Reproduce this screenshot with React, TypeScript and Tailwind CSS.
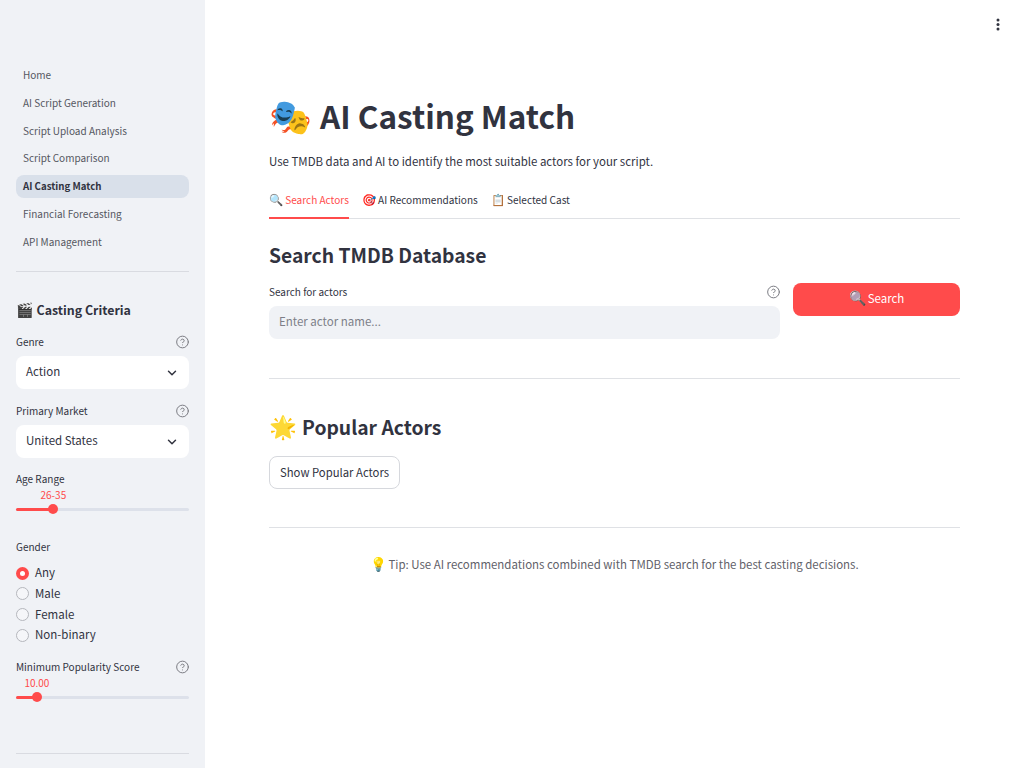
import { ChevronDown, CircleHelp } from "lucide-react";

const navItems = [
  "Home",
  "AI Script Generation",
  "Script Upload Analysis",
  "Script Comparison",
  "AI Casting Match",
  "Financial Forecasting",
  "API Management",
];

const genders = ["Any", "Male", "Female", "Non-binary"];

const fontStack = "[font-family:'Noto_Sans_CJK_SC','Noto_Sans',sans-serif]";

function FieldLabel({ label }: { label: string }) {
  return (
    <div className="flex h-[16px] items-center justify-between text-[10px] text-[#31333f]">
      <span className="pb-[1px]">{label}</span>
      <CircleHelp size={14} strokeWidth={1.7} className="translate-x-[0.5px] text-[#7a7b82]" />
    </div>
  );
}

function SidebarSelect({ label, value }: { label: string; value: string }) {
  return (
    <div>
      <FieldLabel label={label} />
      <div className="mt-[6.5px] flex h-[33px] items-center justify-between rounded-lg bg-white px-[10px] text-[11.5px] text-[#31333f]">
        <span className="pb-[1px]">{value}</span>
        <ChevronDown size={14} strokeWidth={2.5} />
      </div>
    </div>
  );
}

function Slider({ value, percent }: { value: string; percent: number }) {
  return (
    <div className="relative mt-[1px] h-[26px]">
      <span
        className="absolute top-0 -translate-x-1/2 text-[10px] leading-[14px] text-[#ff4b4b]"
        style={{ left: `${percent}%` }}
      >
        {value}
      </span>
      <div className="absolute inset-x-0 top-[19.5px] h-[3px] rounded-full bg-[#dde1ea]">
        <div className="h-full rounded-full bg-[#ff4b4b]" style={{ width: `${percent}%` }} />
      </div>
      <div
        className="absolute top-[16px] h-[10px] w-[10px] -translate-x-1/2 rounded-full bg-[#ff4b4b]"
        style={{ left: `${percent}%` }}
      />
    </div>
  );
}

function Sidebar() {
  return (
    <aside className="h-screen w-[205px] shrink-0 overflow-hidden bg-[#f0f2f6] px-4 pt-[63.5px]">
      <nav className="flex flex-col gap-[4.8px]">
        {navItems.map((item) => (
          <div
            key={item}
            className={
              item === "AI Casting Match"
                ? "flex h-[23px] items-center rounded-lg bg-[#d9e0ea] px-[7px] text-[9.7px] font-semibold text-[#31333f]"
                : "flex h-[23px] items-center px-[7px] pb-[1px] text-[10px] text-[#555761]"
            }
          >
            {item}
          </div>
        ))}
      </nav>
      <hr className="mt-[18px] border-t border-[#d9dbe1]" />
      <h3 className="mt-[26.7px] h-[22px] text-[12.4px] font-semibold leading-[22px] text-[#31333f]">
        <span className="mr-[3.5px] text-[14px] leading-none">🎬</span>Casting Criteria
      </h3>
      <div className="mt-[12.6px]">
        <SidebarSelect label="Genre" value="Action" />
      </div>
      <div className="mt-[13.5px]">
        <SidebarSelect label="Primary Market" value="United States" />
      </div>
      <div className="mt-[13px] flex h-[16px] items-center pb-[1px] text-[10px] text-[#31333f]">Age Range</div>
      <Slider value="26-35" percent={21.6} />
      <div className="mt-[25px] flex h-[16px] items-center pb-[1px] text-[10px] text-[#31333f]">Gender</div>
      <div className="mt-[7.6px] flex flex-col">
        {genders.map((g, i) => (
          <div key={g} className="flex h-[20.7px] items-center gap-[6px] text-[11.5px] text-[#31333f]">
            {i === 0 ? (
              <span className="flex h-[13px] w-[13px] items-center justify-center rounded-full bg-[#ff4b4b]">
                <span className="h-[5px] w-[5px] rounded-full bg-white" />
              </span>
            ) : (
              <span className="h-[13px] w-[13px] rounded-full border border-[#b5b7bd] bg-[#f5f6f9]" />
            )}
            <span>{g}</span>
          </div>
        ))}
      </div>
      <div className="mt-[13.6px]">
        <FieldLabel label="Minimum Popularity Score" />
      </div>
      <Slider value="10.00" percent={12.1} />
      <hr className="mt-[51px] border-t border-[#d9dbe1]" />
    </aside>
  );
}

export default function App() {
  return (
    <div className={`flex h-screen overflow-hidden bg-white ${fontStack}`}>
      <Sidebar />
      <main className="relative min-w-0 flex-1 px-16 pt-[92px] text-[#31333f]">
        <svg className="absolute right-[24px] top-[17px]" width="4" height="15" viewBox="0 0 4 15" fill="#31333f">
          <circle cx="2" cy="3" r="1.5" />
          <circle cx="2" cy="7.5" r="1.5" />
          <circle cx="2" cy="12" r="1.5" />
        </svg>
        <h1 className="h-[50px] text-[31.5px] font-bold leading-[46px] text-[#31333f]">
          <span className="mr-[8px] text-[34.5px] leading-none">🎭</span>AI Casting Match
        </h1>
        <p className="mt-[8.5px] text-[11.46px] leading-[21px]">Use TMDB data and AI to identify the most suitable actors for your script.</p>
        <div className="mt-[9.5px] flex h-[38px] gap-[13px] border-b border-[#dfe1e5] text-[10.05px]">
          <div className="flex h-[38px] items-center border-b-2 border-[#ff4b4b] pt-[2px] text-[#ff4b4b]">
            <span className="mr-[2.2px] text-[11.5px]">🔍</span>Search Actors
          </div>
          <div className="flex h-[38px] items-center">
            <span className="mr-[2.2px] text-[11.5px]">🎯</span>AI Recommendations
          </div>
          <div className="flex h-[38px] items-center">
            <span className="mr-[2.2px] text-[11.5px]">📋</span>Selected Cast
          </div>
        </div>
        <h2 className="mt-[19px] h-[34px] text-[19.3px] font-semibold leading-[34px]">Search TMDB Database</h2>
        <div className="mt-[11px] flex gap-[13px]">
          <div className="flex-1 pt-[1px]">
            <FieldLabel label="Search for actors" />
            <div className="mt-[6px] flex h-[33px] items-center rounded-lg bg-[#f0f2f6] px-[10px] pb-[1px] text-[11.5px] text-[#7d7f88]">
              Enter actor name...
            </div>
          </div>
          <button className="h-[33px] w-[167px] rounded-lg bg-[#ff4b4b] pb-[1px] text-[11.5px] text-white">
            <span className="mr-[2px] text-[14px] leading-none">🔍</span>Search
          </button>
        </div>
        <hr className="mt-[39px] border-t border-[#dfe1e5]" />
        <h2 className="mt-[31px] h-[36px] text-[19.3px] font-semibold leading-[35px]">
          <span className="mr-[5px] text-[22.5px] leading-none">🌟</span>Popular Actors
        </h2>
        <button className="mt-[9.5px] block h-[33px] rounded-lg border border-[#d6d8dd] bg-white px-[10px] text-[11.3px]">Show Popular Actors</button>
        <hr className="mt-[38.5px] border-t border-[#dfe1e5]" />
        <p className="mt-[26px] h-[21px] text-center text-[11.46px] leading-[21px] text-[#5f6169]">
          <span className="mr-[1px] text-[13.5px] leading-none">💡</span>Tip: Use AI recommendations combined with TMDB search for the best casting decisions.
        </p>
      </main>
    </div>
  );
}
